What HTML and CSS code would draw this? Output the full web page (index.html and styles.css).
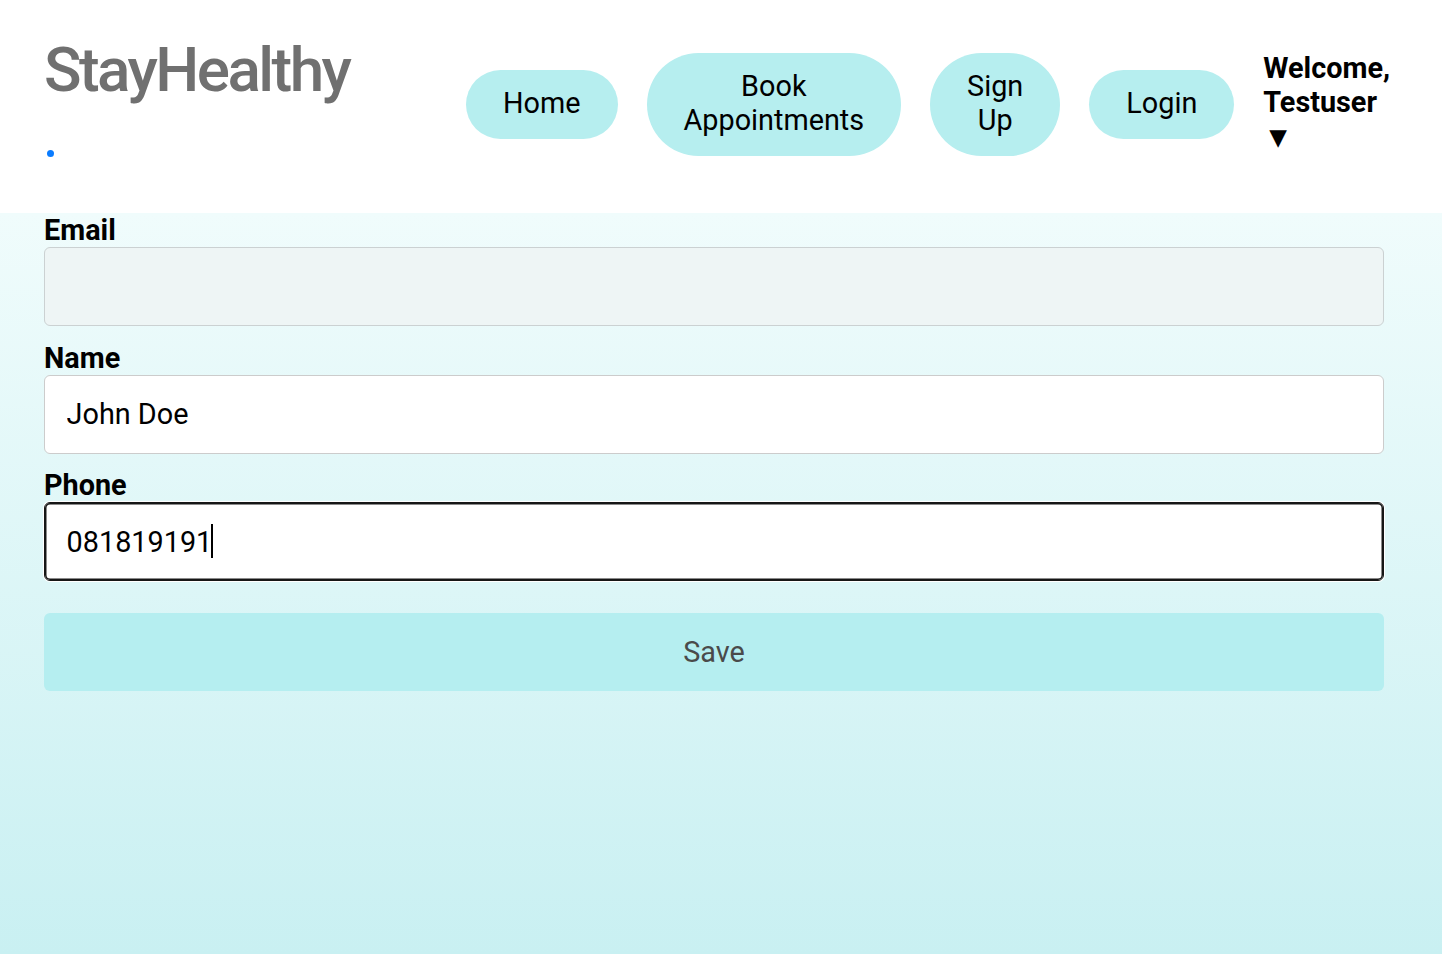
FILE: index.html
```html
<!DOCTYPE html>
<html lang="en">
<head>
<meta charset="utf-8">
<title>StayHealthy - Profile</title>
<link rel="stylesheet" href="styles.css">
</head>
<body>
<header class="topbar">
  <div class="brand">
    <div class="brand-name">StayHealthy</div>
    <span class="brand-dot"></span>
  </div>
  <ul class="nav">
    <li><a class="nav-btn" href="#">Home</a></li>
    <li><a class="nav-btn" href="#">Book<br>Appointments</a></li>
    <li><a class="nav-btn" href="#">Sign<br>Up</a></li>
    <li><a class="nav-btn" href="#">Login</a></li>
    <li class="welcome">
      <span class="welcome-line">Welcome,</span>
      <span class="welcome-line">Testuser</span>
      <span class="welcome-arrow">▼</span>
    </li>
  </ul>
</header>
<main class="content">
  <form class="profile-form">
    <div class="field">
      <label class="field-label" for="email">Email</label>
      <input class="field-input is-disabled" id="email" type="email" value="" disabled>
    </div>
    <div class="field">
      <label class="field-label" for="name">Name</label>
      <input class="field-input" id="name" type="text" value="John Doe">
    </div>
    <div class="field">
      <label class="field-label" for="phone">Phone</label>
      <div class="input-wrap">
        <input class="field-input is-focused" id="phone" type="tel" value="081819191">
        <span class="caret"></span>
      </div>
    </div>
    <button class="save-btn" type="button">Save</button>
  </form>
</main>
</body>
</html>
```
FILE: styles.css
```css
* { box-sizing: border-box; }
html, body { margin: 0; padding: 0; }
body {
  font-family: Roboto, "Liberation Sans", sans-serif;
  font-size: 28.8px;
  color: #000;
  background: #ffffff;
}
.topbar {
  height: 213px;
  display: flex;
  align-items: center;
  padding: 0 0 4px 44px;
  background: #fff;
}
.brand {
  width: 422px;
  align-self: flex-start;
  margin-top: 33px;
  display: flex;
  flex-direction: column;
}
.brand-name {
  font-size: 62px;
  font-weight: 500;
  letter-spacing: -2.55px;
  color: #707070;
  line-height: normal;
}
.brand-dot {
  width: 7px;
  height: 7px;
  border-radius: 50%;
  background: #0a7cff;
  margin: 44px 0 0 3px;
}
.nav {
  list-style: none;
  margin: 0;
  padding: 0;
  display: flex;
  align-items: center;
  gap: 29px;
}
.nav-btn {
  display: block;
  padding: 16px 37px 19px;
  border-radius: 52px;
  background: #b6eeef;
  color: #000;
  text-decoration: none;
  text-align: center;
  line-height: normal;
}
.welcome {
  display: flex;
  flex-direction: column;
  font-weight: 700;
  line-height: normal;
  margin-top: -4px;
}
.welcome-arrow {
  font-family: "DejaVu Sans", sans-serif;
  font-size: 23px;
  line-height: 33px;
  padding: 2px 0 0 6px;
}
.content {
  min-height: calc(100vh - 213px);
  background: linear-gradient(#f0fcfc, #c9f0f2);
  padding: 1px 0 40px 44px;
}
.profile-form {
  width: 1340px;
  margin-top: -1px;
}
.field {
  margin-bottom: 14.4px;
}
.field-label {
  display: block;
  font-weight: 700;
  line-height: normal;
}
.field-input {
  display: block;
  width: 100%;
  font-family: Roboto, "Liberation Sans", sans-serif;
  font-size: 28.8px;
  line-height: normal;
  padding: 21.6px;
  border: 1px solid #cccccc;
  border-radius: 6px;
  background: #fff;
  color: #000;
  outline: none;
}
.field-input.is-disabled {
  background: #eef5f5;
  border-color: #cbd1d2;
}
.field-input.is-focused {
  border-color: #161616;
  box-shadow: inset 0 0 0 1.5px #161616, 0 0 0 1px #fff;
}
.input-wrap {
  position: relative;
}
.caret {
  position: absolute;
  left: 167px;
  top: 22px;
  width: 2px;
  height: 34px;
  background: #000;
}
.save-btn {
  display: block;
  width: 100%;
  margin-top: 32px;
  height: 78px;
  border: none;
  border-radius: 6px;
  background: #b5eef0;
  color: #4a4a4a;
  font-family: Roboto, "Liberation Sans", sans-serif;
  font-size: 28.8px;
}
```
